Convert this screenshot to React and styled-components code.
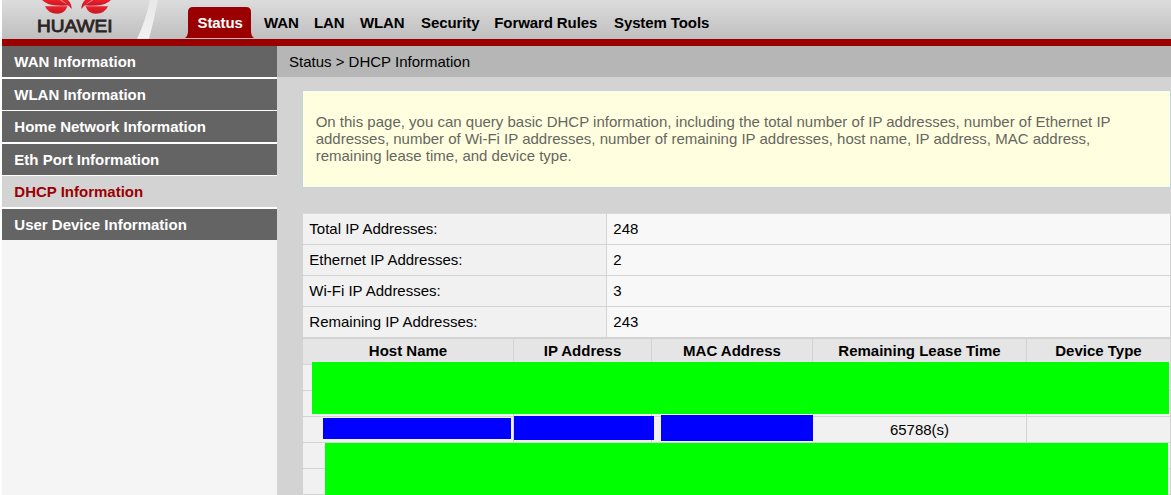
import React from "react";
import styled, { createGlobalStyle } from "styled-components";

const Global = createGlobalStyle`
  * { box-sizing: border-box; }
  body { margin: 0; background: #fff; overflow: hidden; }
`;

const Page = styled.div`
  display: flex;
  flex-direction: column;
  width: 1171px;
  height: 495px;
  padding-left: 2px;
  overflow: hidden;
  background: #fff;
  color: #000;
  font: 15px/17px "Liberation Sans", Arial, sans-serif;
`;

const Header = styled.header`
  display: flex;
  flex: none;
  height: 46px;
  border-bottom: 7px solid #9b0000;
  background: linear-gradient(#dcdcdc, #bfbfbf);
`;

const Brand = styled.div`
  position: relative;
  width: 182px;
  height: 39px;
  flex: none;
`;

const BrandArt = styled.svg`
  display: block;
`;

const BrandName = styled.span`
  position: absolute;
  left: 35px;
  top: 16px;
  font-size: 17px;
  line-height: 20px;
  color: #2b2424;
  -webkit-text-stroke: 0.8px #2b2424;
  transform: translateY(0.5px) scaleX(1.12);
  transform-origin: 0 0;
`;

const Nav = styled.nav`
  display: flex;
  align-items: flex-start;
  gap: 15px;
  font-weight: bold;
  white-space: nowrap;
`;

const NavItem = styled.a`
  flex: none;
  width: ${(p) => p.$width}px;
  padding-top: 14px;
  letter-spacing: -0.1px;
`;

const ActiveTab = styled.a`
  position: relative;
  flex: none;
  width: 70px;
  height: 31px;
  margin: 7px -5px 0 0;
  padding: 7px 0 0 13.5px;
  color: #fff;
  letter-spacing: -0.1px;
  span { position: relative; }
`;

const TabShape = styled.svg`
  position: absolute;
  left: 0;
  top: 0;
`;

const Body = styled.div`
  display: flex;
  flex: 1;
  min-height: 0;
`;

const Sidebar = styled.nav`
  flex: none;
  width: 275px;
  background: #f5f5f5;
`;

const SideItem = styled.a`
  display: block;
  height: ${(p) => 31 + p.$gap}px;
  padding: 7px 0 0 12.3px;
  border-bottom: ${(p) => p.$gap}px solid #fff;
  background: ${(p) => (p.$active ? "#d3d3d3" : "#646464")};
  color: ${(p) => (p.$active ? "#9b0000" : "#fff")};
  font-weight: bold;
`;

const Main = styled.main`
  flex: 1;
  min-width: 0;
  background: #d3d3d3;
`;

const Breadcrumb = styled.div`
  height: 31px;
  padding: 7px 0 0 12px;
  background: #b6b6b6;
`;

const Content = styled.div`
  padding: 13px 0 0 25px;
`;

const Notice = styled.p`
  height: 98px;
  margin: 0 0 25px;
  padding: 22px 40px 0 12.7px;
  border: 1px solid #c3d5e2;
  background: #ffffe0;
  color: #66665f;
`;

const Summary = styled.dl`
  display: grid;
  grid-template-columns: 304px 1fr;
  grid-auto-rows: 31px;
  width: 869px;
  margin: 0;
  border: 1px solid #d3d3d3;
  border-top-color: #dadada;
  border-bottom: 0;
`;

const Term = styled.dt`
  padding: 6px 0 0 6.3px;
  border-right: 1px solid #d3d3d3;
  border-bottom: 1px solid #d3d3d3;
  background: #f1f1f1;
`;

const Value = styled.dd`
  margin: 0;
  padding: 6px 0 0 6.3px;
  border-bottom: 1px solid #d3d3d3;
  background: #f8f8f8;
`;

const Devices = styled.div`
  position: relative;
  width: 869px;
  border: 1px solid #d3d3d3;
`;

const Cell = styled.div`
  padding-top: 4px;
  border-right: 1px solid #d3d3d3;
  border-bottom: 1px solid #d3d3d3;
  &:last-child { border-right: 0; }
`;

const HeadCell = styled(Cell)`
  padding-top: 3px;
`;

const DeviceRow = styled.div`
  display: grid;
  grid-template-columns: 211px 138px 161px 214px 1fr;
  height: 26px;
  background: ${(p) => (p.$head ? "#e5e5e5" : "#f1f1f1")};
  font-weight: ${(p) => (p.$head ? "bold" : "normal")};
  text-align: center;
`;

const Redaction = styled.div`
  position: absolute;
  left: ${(p) => p.$x}px;
  top: ${(p) => p.$y}px;
  width: ${(p) => p.$w}px;
  height: ${(p) => p.$h}px;
  background: ${(p) => p.$color};
`;

const navItems = [
  ["WAN", 35], ["LAN", 31], ["WLAN", 46], ["Security", 58.3], ["Forward Rules", 104.7], ["System Tools", 96],
];
const sideItems = [
  ["WAN Information", 2], ["WLAN Information", 1], ["Home Network Information", 2],
  ["Eth Port Information", 1], ["DHCP Information", 2], ["User Device Information", 0],
];
const totals = [
  ["Total IP Addresses:", 248], ["Ethernet IP Addresses:", 2],
  ["Wi-Fi IP Addresses:", 3], ["Remaining IP Addresses:", 243],
];
const columns = ["Host Name", "IP Address", "MAC Address", "Remaining Lease Time", "Device Type"];
const leases = ["", "", "65788(s)", "", "", ""];
const redactions = [
  [9, 23, 857, 52, "#0f0"],
  [20, 79, 188, 21, "#00f"],
  [211, 77, 140, 24, "#00f"],
  [358, 76, 152, 26, "#00f"],
  [22, 104, 843, 53, "#0f0"],
];

function Petals(props) {
  return (
    <g fill="url(#petal)" {...props}>
      <path d="M42 0H60Q64 3 69.5 5.3Q65 6 57 5.600Q47 5 42 0Z" />
      <path d="M45 6.2H67.5Q64.500 13.700 57.500 13.700Q48 13.500 45 6.200Z" />
      <path d="M61 0H68Q72 4 71.500 9Q69 5 61 0Z" />
    </g>
  );
}

function Logo() {
  return (
    <Brand>
      <BrandArt width="182" height="39" viewBox="2 0 182 39">
        <defs>
          <linearGradient id="petal" x1="0" y1="0" x2="0" y2="1">
            <stop offset="0" stopColor="#ef1f2a" />
            <stop offset="1" stopColor="#c61823" />
          </linearGradient>
          <linearGradient id="slash" x1="0" y1="0" x2="0" y2="1">
            <stop offset="0" stopColor="#e8e8e8" />
            <stop offset="1" stopColor="#f2f2f2" />
          </linearGradient>
        </defs>
        <path d="M150 0H158Q154 20 149 39H137Q146 20 150 0Z" fill="url(#slash)" />
        <Petals />
        <Petals transform="translate(153 0) scale(-1 1)" />
      </BrandArt>
      <BrandName>HUAWEI</BrandName>
    </Brand>
  );
}

export default function App() {
  return (
    <Page>
      <Global />
      <Header>
        <Logo />
        <Nav>
          <ActiveTab>
            <TabShape width="70" height="31" viewBox="0 0 70 31">
              <path d="M1 31Q4 29 4 24V5Q4 0 9 0H62Q67 0 67 5V24Q67 29 70 31Z" fill="#9b0000" />
            </TabShape>
            <span>Status</span>
          </ActiveTab>
          {navItems.map(([label, width]) => (
            <NavItem key={label} $width={width}>{label}</NavItem>
          ))}
        </Nav>
      </Header>
      <Body>
        <Sidebar>
          {sideItems.map(([label, gap]) => (
            <SideItem key={label} $gap={gap} $active={label === "DHCP Information"}>{label}</SideItem>
          ))}
        </Sidebar>
        <Main>
          <Breadcrumb>Status &gt; DHCP Information</Breadcrumb>
          <Content>
            <Notice>
              On this page, you can query basic DHCP information, including the total number of IP addresses, number of Ethernet IP addresses, number of Wi-Fi IP addresses, number of remaining IP addresses, host name, IP address, MAC address, remaining lease time, and device type.
            </Notice>
            <Summary>
              {totals.map(([term, value]) => (
                <React.Fragment key={term}>
                  <Term>{term}</Term>
                  <Value>{value}</Value>
                </React.Fragment>
              ))}
            </Summary>
            <Devices>
              <DeviceRow $head>
                {columns.map((c) => <HeadCell key={c}>{c}</HeadCell>)}
              </DeviceRow>
              {leases.map((lease, i) => (
                <DeviceRow key={i}>
                  {columns.map((c, j) => <Cell key={c}>{j === 3 ? lease : ""}</Cell>)}
                </DeviceRow>
              ))}
              {redactions.map(([x, y, w, h, color]) => (
                <Redaction key={`${x}-${y}`} $x={x} $y={y} $w={w} $h={h} $color={color} />
              ))}
            </Devices>
          </Content>
        </Main>
      </Body>
    </Page>
  );
}
